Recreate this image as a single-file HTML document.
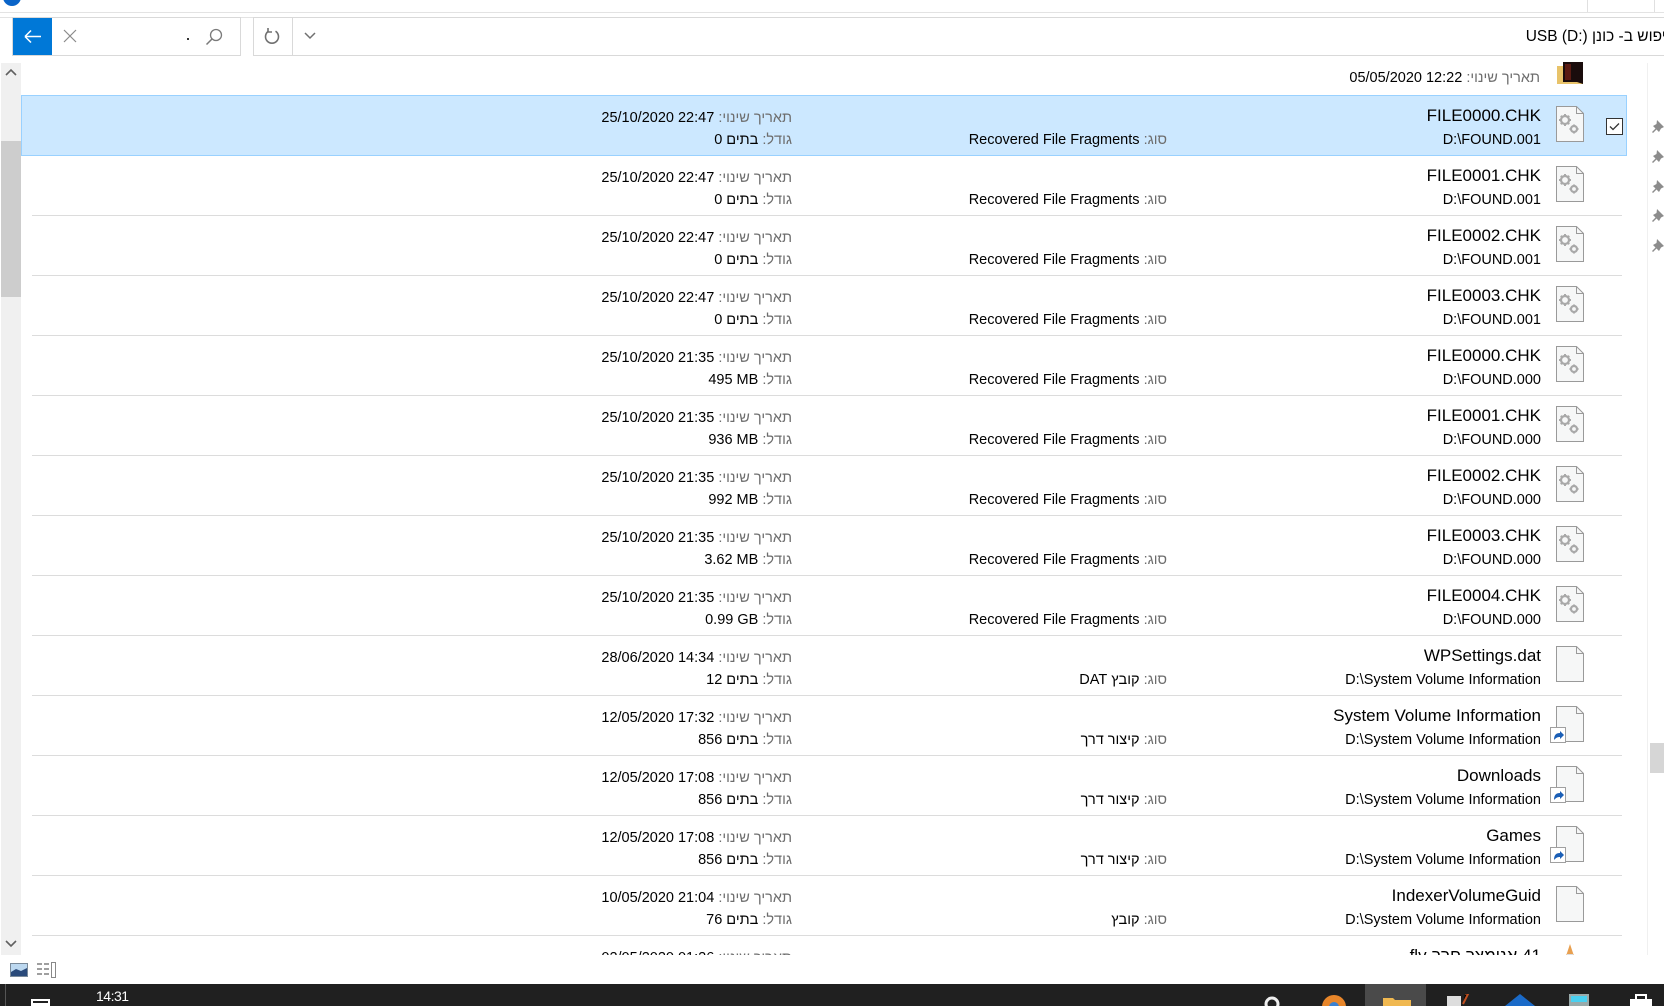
<!DOCTYPE html>
<html><head><meta charset="utf-8">
<style>
*{margin:0;padding:0;box-sizing:border-box}
body{width:1664px;height:1006px;overflow:hidden;background:#fff;font-family:"Liberation Sans","Noto Sans CJK JP",sans-serif;position:relative;color:#000}
.a{position:absolute}
.r{position:absolute;direction:rtl;white-space:nowrap;text-align:right}
.g{color:#6d6d6d}
.nm{font-size:17px}
.sm{font-size:14.5px}
.l{direction:ltr;unicode-bidi:isolate}
.sep{position:absolute;left:32px;width:1590px;height:1px;background:#dcdcdc}
</style></head><body>

<div class="a" style="left:3px;top:-12px;width:18px;height:18px;border-radius:50%;background:#0a64c8"></div>
<div class="a" style="left:1587px;top:0;width:68px;height:12px;border-left:1px solid #e0e0e0;border-right:1px solid #e0e0e0"></div>
<div class="a" style="left:0;top:12px;width:1664px;height:1px;background:#e3e3e3"></div>
<div class="a" style="left:0;top:17px;width:1664px;height:1px;background:#e3e3e3"></div>

<div class="a" style="left:12px;top:17px;width:229px;height:39px;border:1px solid #d9d9d9"></div>
<div class="a" style="left:13px;top:18px;width:39px;height:37px;background:#0078d7"></div>
<svg class="a" style="left:13px;top:18px" width="39" height="37"><path d="M12 18.5h16M12 18.5l6-6M12 18.5l6 6" stroke="#fff" stroke-width="1.5" fill="none"/></svg>
<svg class="a" style="left:63px;top:29px" width="14" height="14"><path d="M1 1l12 12M13 1L1 13" stroke="#8a8a8a" stroke-width="1.2"/></svg>
<div class="a" style="left:187px;top:38px;width:2px;height:2px;background:#333"></div>
<svg class="a" style="left:205px;top:28px" width="18" height="18"><circle cx="11" cy="7" r="5.5" stroke="#7a7a7a" stroke-width="1.3" fill="none"/><path d="M7 11l-5.5 5.5" stroke="#7a7a7a" stroke-width="1.5"/></svg>

<div class="a" style="left:253px;top:17px;width:1420px;height:39px;border:1px solid #d9d9d9"></div>
<div class="a" style="left:292px;top:17px;width:1px;height:39px;background:#d9d9d9"></div>
<svg class="a" style="left:262px;top:26px" width="20" height="20"><path d="M13.5 5.2A6.5 6.5 0 1 1 6.5 5.2" stroke="#707070" stroke-width="1.6" fill="none"/><path d="M6 2v4h4" stroke="#707070" stroke-width="1.6" fill="none"/></svg>
<svg class="a" style="left:303px;top:31px" width="14" height="10"><path d="M2 2l5 5 5-5" stroke="#707070" stroke-width="1.5" fill="none"/></svg>
<div class="r" style="right:-12px;top:28px;font-size:15.5px;">חיפוש ב- כונן <span class="l">USB (D:)</span></div>

<div class="a" style="left:1px;top:63px;width:20px;height:892px;background:#f0f0f0"></div>
<div class="a" style="left:1px;top:141px;width:20px;height:156px;background:#cdcdcd"></div>
<svg class="a" style="left:4px;top:67px" width="14" height="10"><path d="M2 8l5-5 5 5" stroke="#606060" stroke-width="1.6" fill="none"/></svg>
<svg class="a" style="left:4px;top:939px" width="14" height="10"><path d="M2 2l5 5 5-5" stroke="#606060" stroke-width="1.6" fill="none"/></svg>

<div class="a" style="left:1647px;top:63px;width:1px;height:892px;background:#f0f0f0"></div>
<div class="a" style="left:1650px;top:743px;width:14px;height:30px;background:#d6d6d6"></div>

<svg width="0" height="0" style="position:absolute">
<defs>
<g id="pg"><path d="M0.5 0.5h20l7 7v28h-27z" fill="#f6f7f7" stroke="#9a9a9a"/><path d="M20.5 0.5v7h7" fill="none" stroke="#9a9a9a"/></g>
<g id="gr"><g fill="none" stroke="#a9a9a9" stroke-width="2.2"><circle cx="9" cy="14" r="4"/><circle cx="18" cy="23" r="3"/></g><g stroke="#a9a9a9" stroke-width="2"><path d="M9 8v2M9 18v2M3 14h2M13 14h2M4.8 9.8l1.4 1.4M11.8 16.8l1.4 1.4M4.8 18.2l1.4-1.4M11.8 11.2l1.4-1.4M18 18.5v1.5M18 26v1.5M13.5 23h1.5M21 23h1.5"/></g></g>
<g id="pin"><path d="M5 0l7 7-3 1.5-2 3.5-2.5-2.5L1 13 0 12l3.5-3.5L1 6l3.5-2z" fill="#8c8c8c"/></g>
<g id="sc"><rect x="0.5" y="0.5" width="15" height="15" fill="#fff" stroke="#a0a0a0"/><path d="M4 13c0-5 2-7 6-7v-2l4 4-4 4v-2c-3 0-4 1-6 3z" fill="#1b5fb6"/></g>
</defs></svg>

<svg class="a" style="left:1557px;top:62px" width="28" height="24"><path d="M0 4h10l2 2h14v16H0z" fill="#e8c36a"/><path d="M6 0h20v22l-6-2H6z" fill="#1a0c0c"/><path d="M8 2h6v16H8z" fill="#5a1a12"/></svg>
<div class="r sm" style="right:124px;top:70px"><span class="g">תאריך שינוי:</span> <span class="l">05/05/2020 12:22</span></div>

<div class="a" style="left:21px;top:95px;width:1606px;height:61px;background:#cce8ff;border:1px solid #99d1ff"></div>
<div class="a" style="left:1606px;top:118px;width:17px;height:17px;border:1px solid #333;background:#fff"></div>
<svg class="a" style="left:1606px;top:118px" width="17" height="17"><path d="M4 8.5l3 3 6-6" stroke="#333" stroke-width="1.3" fill="none"/></svg>

<svg class="a" style="left:1652px;top:120px" width="12" height="140"><use href="#pin"/><use href="#pin" y="30"/><use href="#pin" y="60"/><use href="#pin" y="89"/><use href="#pin" y="119"/></svg>

<div id="list" style="position:absolute;left:0;top:0;width:1664px;height:955px;overflow:hidden">
<div class="sep" style="top:215px"></div><div class="sep" style="top:275px"></div><div class="sep" style="top:335px"></div><div class="sep" style="top:395px"></div><div class="sep" style="top:455px"></div><div class="sep" style="top:515px"></div><div class="sep" style="top:575px"></div><div class="sep" style="top:635px"></div><div class="sep" style="top:695px"></div><div class="sep" style="top:755px"></div><div class="sep" style="top:815px"></div><div class="sep" style="top:875px"></div><div class="sep" style="top:935px"></div>

<svg class="a" style="left:1556px;top:106px" width="29" height="37"><use href="#pg"/><use href="#gr"/></svg>
<div class="r nm" style="right:123px;top:106px">FILE0000.CHK</div>
<div class="r sm" style="right:123px;top:132px">D:\FOUND.001</div>
<div class="r sm" style="right:497px;top:132px"><span class="g">סוג:</span> Recovered File Fragments</div>
<div class="r sm" style="right:872px;top:110px"><span class="g">תאריך שינוי:</span> <span class="l">25/10/2020 22:47</span></div>
<div class="r sm" style="right:872px;top:132px"><span class="g">גודל:</span> בתים 0</div>

<svg class="a" style="left:1556px;top:166px" width="29" height="37"><use href="#pg"/><use href="#gr"/></svg>
<div class="r nm" style="right:123px;top:166px">FILE0001.CHK</div>
<div class="r sm" style="right:123px;top:192px">D:\FOUND.001</div>
<div class="r sm" style="right:497px;top:192px"><span class="g">סוג:</span> Recovered File Fragments</div>
<div class="r sm" style="right:872px;top:170px"><span class="g">תאריך שינוי:</span> <span class="l">25/10/2020 22:47</span></div>
<div class="r sm" style="right:872px;top:192px"><span class="g">גודל:</span> בתים 0</div>

<svg class="a" style="left:1556px;top:226px" width="29" height="37"><use href="#pg"/><use href="#gr"/></svg>
<div class="r nm" style="right:123px;top:226px">FILE0002.CHK</div>
<div class="r sm" style="right:123px;top:252px">D:\FOUND.001</div>
<div class="r sm" style="right:497px;top:252px"><span class="g">סוג:</span> Recovered File Fragments</div>
<div class="r sm" style="right:872px;top:230px"><span class="g">תאריך שינוי:</span> <span class="l">25/10/2020 22:47</span></div>
<div class="r sm" style="right:872px;top:252px"><span class="g">גודל:</span> בתים 0</div>

<svg class="a" style="left:1556px;top:286px" width="29" height="37"><use href="#pg"/><use href="#gr"/></svg>
<div class="r nm" style="right:123px;top:286px">FILE0003.CHK</div>
<div class="r sm" style="right:123px;top:312px">D:\FOUND.001</div>
<div class="r sm" style="right:497px;top:312px"><span class="g">סוג:</span> Recovered File Fragments</div>
<div class="r sm" style="right:872px;top:290px"><span class="g">תאריך שינוי:</span> <span class="l">25/10/2020 22:47</span></div>
<div class="r sm" style="right:872px;top:312px"><span class="g">גודל:</span> בתים 0</div>

<svg class="a" style="left:1556px;top:346px" width="29" height="37"><use href="#pg"/><use href="#gr"/></svg>
<div class="r nm" style="right:123px;top:346px">FILE0000.CHK</div>
<div class="r sm" style="right:123px;top:372px">D:\FOUND.000</div>
<div class="r sm" style="right:497px;top:372px"><span class="g">סוג:</span> Recovered File Fragments</div>
<div class="r sm" style="right:872px;top:350px"><span class="g">תאריך שינוי:</span> <span class="l">25/10/2020 21:35</span></div>
<div class="r sm" style="right:872px;top:372px"><span class="g">גודל:</span> <span class="l">495 MB</span></div>

<svg class="a" style="left:1556px;top:406px" width="29" height="37"><use href="#pg"/><use href="#gr"/></svg>
<div class="r nm" style="right:123px;top:406px">FILE0001.CHK</div>
<div class="r sm" style="right:123px;top:432px">D:\FOUND.000</div>
<div class="r sm" style="right:497px;top:432px"><span class="g">סוג:</span> Recovered File Fragments</div>
<div class="r sm" style="right:872px;top:410px"><span class="g">תאריך שינוי:</span> <span class="l">25/10/2020 21:35</span></div>
<div class="r sm" style="right:872px;top:432px"><span class="g">גודל:</span> <span class="l">936 MB</span></div>

<svg class="a" style="left:1556px;top:466px" width="29" height="37"><use href="#pg"/><use href="#gr"/></svg>
<div class="r nm" style="right:123px;top:466px">FILE0002.CHK</div>
<div class="r sm" style="right:123px;top:492px">D:\FOUND.000</div>
<div class="r sm" style="right:497px;top:492px"><span class="g">סוג:</span> Recovered File Fragments</div>
<div class="r sm" style="right:872px;top:470px"><span class="g">תאריך שינוי:</span> <span class="l">25/10/2020 21:35</span></div>
<div class="r sm" style="right:872px;top:492px"><span class="g">גודל:</span> <span class="l">992 MB</span></div>

<svg class="a" style="left:1556px;top:526px" width="29" height="37"><use href="#pg"/><use href="#gr"/></svg>
<div class="r nm" style="right:123px;top:526px">FILE0003.CHK</div>
<div class="r sm" style="right:123px;top:552px">D:\FOUND.000</div>
<div class="r sm" style="right:497px;top:552px"><span class="g">סוג:</span> Recovered File Fragments</div>
<div class="r sm" style="right:872px;top:530px"><span class="g">תאריך שינוי:</span> <span class="l">25/10/2020 21:35</span></div>
<div class="r sm" style="right:872px;top:552px"><span class="g">גודל:</span> <span class="l">3.62 MB</span></div>

<svg class="a" style="left:1556px;top:586px" width="29" height="37"><use href="#pg"/><use href="#gr"/></svg>
<div class="r nm" style="right:123px;top:586px">FILE0004.CHK</div>
<div class="r sm" style="right:123px;top:612px">D:\FOUND.000</div>
<div class="r sm" style="right:497px;top:612px"><span class="g">סוג:</span> Recovered File Fragments</div>
<div class="r sm" style="right:872px;top:590px"><span class="g">תאריך שינוי:</span> <span class="l">25/10/2020 21:35</span></div>
<div class="r sm" style="right:872px;top:612px"><span class="g">גודל:</span> <span class="l">0.99 GB</span></div>

<svg class="a" style="left:1556px;top:646px" width="29" height="37"><use href="#pg"/></svg>
<div class="r nm" style="right:123px;top:646px">WPSettings.dat</div>
<div class="r sm" style="right:123px;top:672px">D:\System Volume Information</div>
<div class="r sm" style="right:497px;top:672px"><span class="g">סוג:</span> קובץ DAT</div>
<div class="r sm" style="right:872px;top:650px"><span class="g">תאריך שינוי:</span> <span class="l">28/06/2020 14:34</span></div>
<div class="r sm" style="right:872px;top:672px"><span class="g">גודל:</span> בתים 12</div>

<svg class="a" style="left:1550px;top:706px" width="36" height="40"><use href="#pg" x="6"/><use href="#sc" y="21"/></svg>
<div class="r nm" style="right:123px;top:706px">System Volume Information</div>
<div class="r sm" style="right:123px;top:732px">D:\System Volume Information</div>
<div class="r sm" style="right:497px;top:732px"><span class="g">סוג:</span> קיצור דרך</div>
<div class="r sm" style="right:872px;top:710px"><span class="g">תאריך שינוי:</span> <span class="l">12/05/2020 17:32</span></div>
<div class="r sm" style="right:872px;top:732px"><span class="g">גודל:</span> בתים 856</div>

<svg class="a" style="left:1550px;top:766px" width="36" height="40"><use href="#pg" x="6"/><use href="#sc" y="21"/></svg>
<div class="r nm" style="right:123px;top:766px">Downloads</div>
<div class="r sm" style="right:123px;top:792px">D:\System Volume Information</div>
<div class="r sm" style="right:497px;top:792px"><span class="g">סוג:</span> קיצור דרך</div>
<div class="r sm" style="right:872px;top:770px"><span class="g">תאריך שינוי:</span> <span class="l">12/05/2020 17:08</span></div>
<div class="r sm" style="right:872px;top:792px"><span class="g">גודל:</span> בתים 856</div>

<svg class="a" style="left:1550px;top:826px" width="36" height="40"><use href="#pg" x="6"/><use href="#sc" y="21"/></svg>
<div class="r nm" style="right:123px;top:826px">Games</div>
<div class="r sm" style="right:123px;top:852px">D:\System Volume Information</div>
<div class="r sm" style="right:497px;top:852px"><span class="g">סוג:</span> קיצור דרך</div>
<div class="r sm" style="right:872px;top:830px"><span class="g">תאריך שינוי:</span> <span class="l">12/05/2020 17:08</span></div>
<div class="r sm" style="right:872px;top:852px"><span class="g">גודל:</span> בתים 856</div>

<svg class="a" style="left:1556px;top:886px" width="29" height="37"><use href="#pg"/></svg>
<div class="r nm" style="right:123px;top:886px">IndexerVolumeGuid</div>
<div class="r sm" style="right:123px;top:912px">D:\System Volume Information</div>
<div class="r sm" style="right:497px;top:912px"><span class="g">סוג:</span> קובץ</div>
<div class="r sm" style="right:872px;top:890px"><span class="g">תאריך שינוי:</span> <span class="l">10/05/2020 21:04</span></div>
<div class="r sm" style="right:872px;top:912px"><span class="g">גודל:</span> בתים 76</div>

<svg class="a" style="left:1563px;top:944px" width="14" height="14"><path d="M7 0l4 12H3z" fill="#e8a050"/><path d="M4 10h6v4H4z" fill="#ddd"/></svg>
<div class="r nm" style="right:123px;top:946px">41 אנימצר חרב.flv</div>
<div class="r sm" style="right:872px;top:950px"><span class="g">תאריך שינוי:</span> <span class="l">02/05/2020 01:26</span></div>
</div>

<svg class="a" style="left:10px;top:963px" width="18" height="14"><rect x="0.5" y="0.5" width="17" height="13" fill="#bcd8f0" stroke="#7a8a9a"/><path d="M1 9l5-3 5 2 6-3v8H1z" fill="#2a4a7a"/></svg>
<svg class="a" style="left:37px;top:962px" width="20" height="16"><path d="M0 2h5M7 2h5M0 7h5M7 7h5M0 12h5M7 12h5" stroke="#666" stroke-width="1.2"/><rect x="14.5" y="0.5" width="4" height="15" fill="#fff" stroke="#888"/></svg>

<div class="a" style="left:0;top:984px;width:1664px;height:22px;background:#202020"></div>
<div class="a" style="left:5px;top:984px;width:1px;height:22px;background:#555"></div>
<div class="a" style="left:31px;top:999px;width:19px;height:7px;background:#fff"></div>
<div class="a" style="left:33px;top:1001px;width:15px;height:2px;background:#202020"></div>
<div class="a" style="left:96px;top:988px;font-size:14px;color:#fff;letter-spacing:-0.5px">14:31</div>
<div class="a" style="left:1365px;top:984px;width:61px;height:22px;background:#4a4a4a"></div>
<svg class="a" style="left:1262px;top:994px" width="20" height="12"><circle cx="10" cy="10" r="6" stroke="#eee" stroke-width="3" fill="none"/></svg>
<svg class="a" style="left:1320px;top:993px" width="28" height="13"><circle cx="14" cy="14" r="12" fill="#e8862a"/><circle cx="14" cy="14" r="5" fill="#3a80d0"/></svg>
<svg class="a" style="left:1382px;top:995px" width="30" height="11"><path d="M1 3h10l2 2h16v6H1z" fill="#f0b850"/></svg>
<svg class="a" style="left:1445px;top:994px" width="26" height="12"><rect x="2" y="2" width="14" height="10" fill="#ddd"/><path d="M20 0l4-2-6 12" stroke="#c05020" stroke-width="2"/></svg>
<svg class="a" style="left:1505px;top:993px" width="30" height="13"><path d="M0 13L15 1l15 12z" fill="#1a6ac8"/></svg>
<svg class="a" style="left:1568px;top:993px" width="22" height="13"><rect x="1" y="1" width="20" height="12" fill="#9aa"/><rect x="3" y="3" width="16" height="6" fill="#4ad0f0"/></svg>
<svg class="a" style="left:1628px;top:993px" width="26" height="13"><path d="M8 6V2h10v4" stroke="#fff" stroke-width="2" fill="none"/><rect x="2" y="6" width="22" height="8" fill="#fff"/></svg>

</body></html>
